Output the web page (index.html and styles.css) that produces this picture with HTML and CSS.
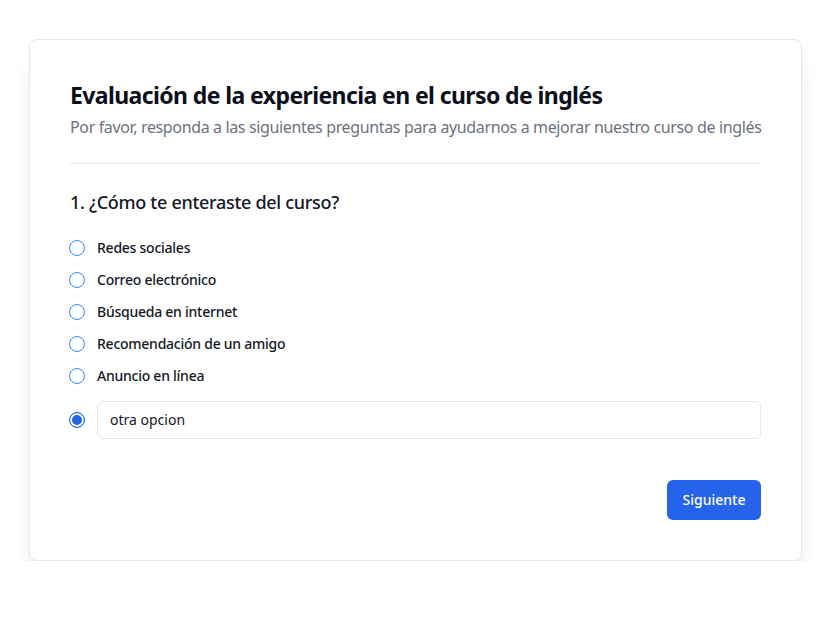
FILE: index.html
```html
<!DOCTYPE html>
<html lang="es">
<head>
<meta charset="utf-8">
<title>Evaluación</title>
<link rel="stylesheet" href="styles.css">
</head>
<body>
<main class="card">
  <header class="head">
    <h1 class="title">Evaluación de la experiencia en el curso de inglés</h1>
    <p class="subtitle">Por favor, responda a las siguientes preguntas para ayudarnos a mejorar nuestro curso de inglés</p>
  </header>
  <section class="question">
    <h2 class="q-title">1. ¿Cómo te enteraste del curso?</h2>
    <div class="options">
      <label class="option"><span class="radio"></span><span class="label">Redes sociales</span></label>
      <label class="option"><span class="radio"></span><span class="label">Correo electrónico</span></label>
      <label class="option"><span class="radio"></span><span class="label">Búsqueda en internet</span></label>
      <label class="option"><span class="radio"></span><span class="label">Recomendación de un amigo</span></label>
      <label class="option"><span class="radio"></span><span class="label">Anuncio en línea</span></label>
      <div class="option other"><span class="radio checked"></span><div class="input">otra opcion</div></div>
    </div>
  </section>
  <div class="actions"><button class="btn">Siguiente</button></div>
</main>
</body>
</html>
```
FILE: styles.css
```css
* { box-sizing: border-box; }
html, body { margin: 0; padding: 0; background: #fff; }
body { font-family: "Noto Sans", sans-serif; color: #111827; }
.card {
  margin: 39px 27px 0 29px;
  background: #fff;
  border: 1px solid #e5e7eb;
  border-radius: 8px;
  padding: 39px 40px 40px;
  box-shadow: 0 20px 25px -5px rgba(0,0,0,.1), 0 8px 10px -6px rgba(0,0,0,.1);
}
.head { padding-bottom: 24px; border-bottom: 1px solid #e5e7eb; }
.title { margin: 0; font-size: 23px; line-height: 32px; font-weight: 700; color: #0b0f1a; letter-spacing: -0.6px; }
.subtitle { margin: 4px 0 0; font-size: 16px; line-height: 24px; color: #6b7280; letter-spacing: -0.36px; white-space: nowrap; }
.question { padding-top: 24px; }
.q-title { margin: 0; font-size: 18px; line-height: 28px; font-weight: 500; color: #111827; letter-spacing: -0.3px; }
.options { display: flex; flex-direction: column; gap: 12px; margin-top: 22px; }
.option { display: flex; align-items: center; gap: 12px; height: 20px; }
.radio {
  width: 16px; height: 16px; border-radius: 50%; margin-left: -1px;
  border: 1.5px solid #3b82f6; background: #fff; flex: none;
}
.radio.checked { background: #2563eb; box-shadow: inset 0 0 0 2px #fff; border-color: #2563eb; }
.label { font-size: 14px; line-height: 20px; font-weight: 500; color: #111827; letter-spacing: -0.25px; }
.option.other { height: 38px; margin-top: 3px; }
.input {
  flex: 1; height: 38px; border: 1px solid #e5e7eb; border-radius: 6px;
  padding: 8px 12px; font-size: 14px; line-height: 20px; color: #111827;
}
.actions { display: flex; justify-content: flex-end; margin-top: 41px; }
.btn {
  font-family: inherit; font-size: 14px; font-weight: 500; line-height: 20px;
  color: #fff; background: #2563eb; border: 0; border-radius: 6px;
  width: 94px; height: 40px; padding: 0;
}
```
